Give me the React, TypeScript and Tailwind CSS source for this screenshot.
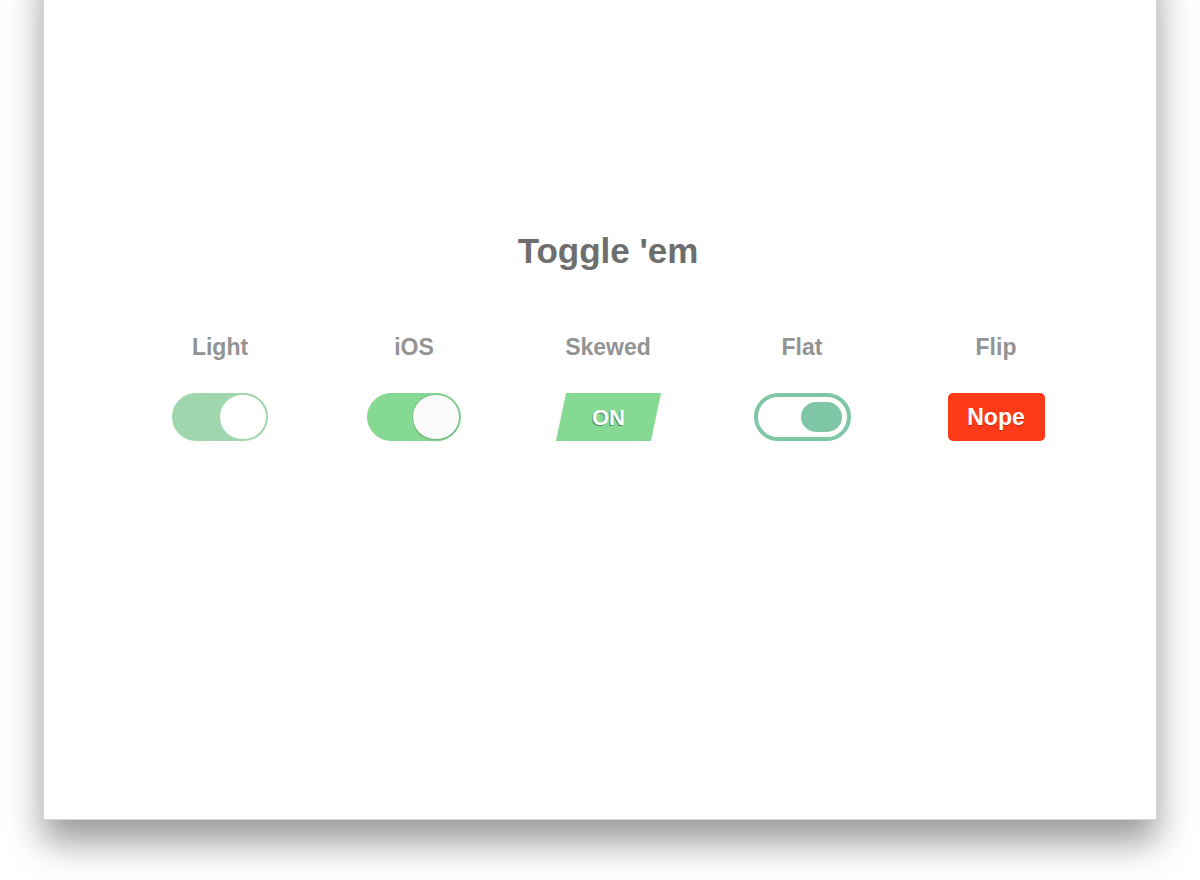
const FONT = { fontFamily: '"Liberation Sans", Arial, sans-serif' };

function LightToggle() {
  return (
    <div className="flex h-[48px] w-[96px] justify-end rounded-full bg-[#9fd6ae] p-[2px]">
      <div className="h-[44px] w-[46px] rounded-full bg-white" />
    </div>
  );
}

function IosToggle() {
  return (
    <div className="flex h-[48px] w-[94px] justify-end rounded-full border border-[#86d993] bg-[#86d993] p-[1px]">
      <div className="h-[44px] w-[46px] rounded-full bg-[#fbfbfb] shadow-[0_0_0_1px_rgba(0,0,0,0.1),0_3px_0_rgba(0,0,0,0.06)]" />
    </div>
  );
}

function SkewedToggle() {
  return (
    <div className="flex h-[48px] w-[95px] -skew-x-12 items-center justify-center bg-[#86d993]">
      <span className="skew-x-12 text-[22px] font-bold text-white [text-shadow:-1px_1px_0_rgba(0,0,0,0.4)]">ON</span>
    </div>
  );
}

function FlatToggle() {
  return (
    <div className="flex h-[48px] w-[97px] items-center justify-end rounded-full border-[4px] border-[#7fc6a6] bg-white p-[5px]">
      <div className="h-[30px] w-[41px] rounded-full bg-[#7fc6a6]" />
    </div>
  );
}

function FlipToggle() {
  return (
    <div className="flex h-[48px] w-[97px] items-center justify-center rounded-[5px] bg-[#ff3a19] text-[23px] font-bold text-white [text-shadow:0_1px_0_rgba(0,0,0,0.3)]">
      Nope
    </div>
  );
}

const TOGGLES = [
  { label: "Light", el: <LightToggle /> },
  { label: "iOS", el: <IosToggle /> },
  { label: "Skewed", el: <SkewedToggle /> },
  { label: "Flat", el: <FlatToggle /> },
  { label: "Flip", el: <FlipToggle /> },
];

export default function App() {
  return (
    <div className="h-[880px] w-[1200px] overflow-hidden bg-white px-[43px]" style={FONT}>
      <div className="-mt-[40px] h-[860px] border-x border-b border-[#d4d4d4] bg-white pl-[16px] pt-[271px] shadow-[0_22px_34px_rgba(0,0,0,0.4)]">
        <h1 className="text-center text-[35px] font-bold leading-[40px] text-[#6e6e6e]">Toggle 'em</h1>
        <div className="mx-auto mt-[62px] grid w-[970px] grid-cols-5">
          {TOGGLES.map((t) => (
            <div key={t.label} className="flex flex-col items-center">
              <div className="text-[23px] font-bold leading-[28px] text-[#939393]">{t.label}</div>
              <div className="mt-[32px]">{t.el}</div>
            </div>
          ))}
        </div>
      </div>
    </div>
  );
}
